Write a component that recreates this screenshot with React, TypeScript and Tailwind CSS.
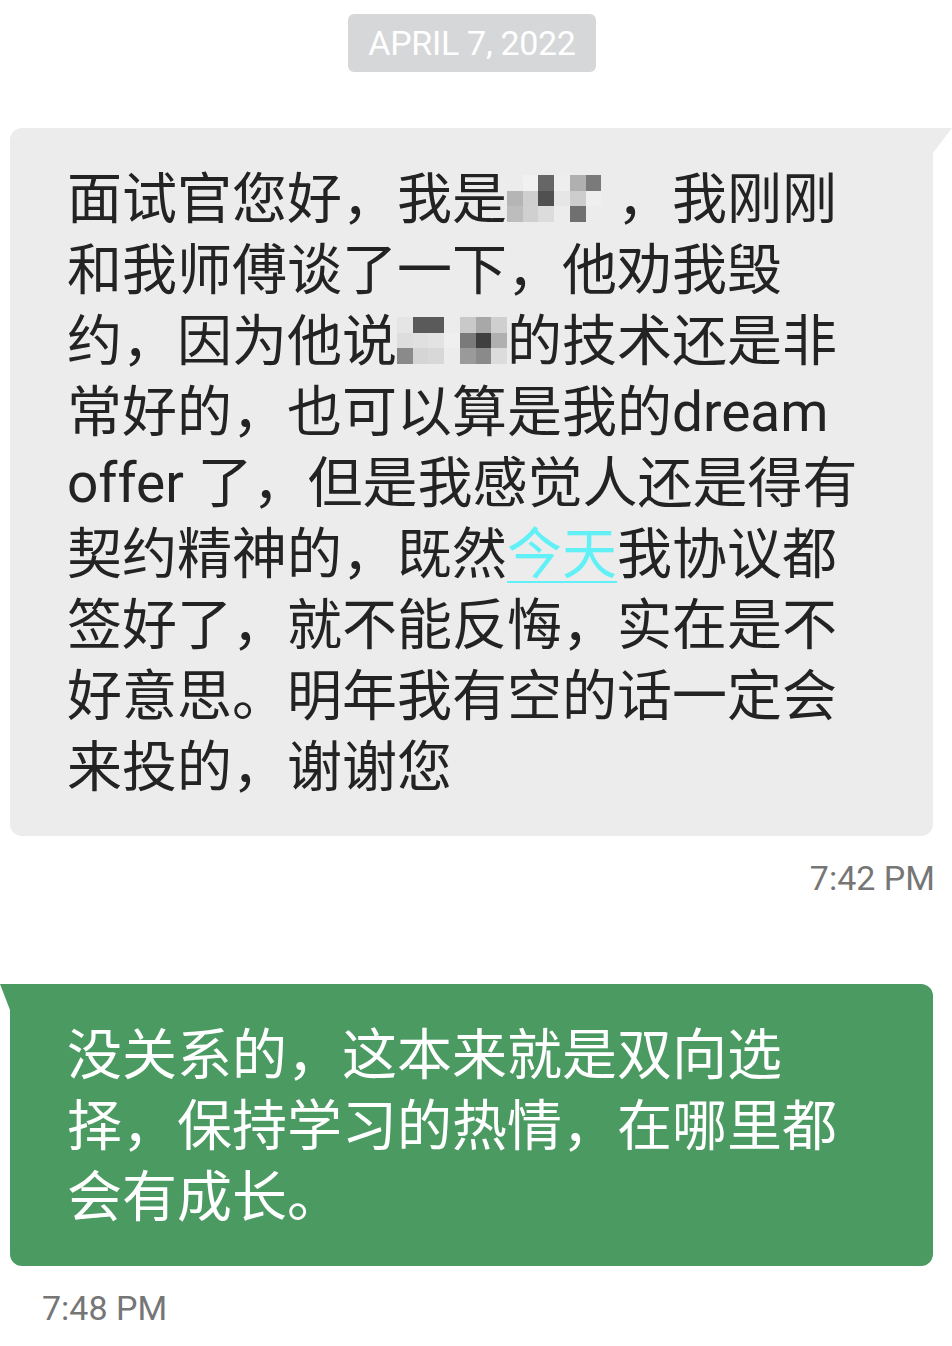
const FONT = "font-['Roboto','Noto_Sans_CJK_SC',sans-serif]";

// pixelated name blur, 7 cols x 3 rows
const BLUR_A = [
  'bg-[#ececec]', 'bg-[#f1f1f1]', 'bg-[#666666]', 'bg-[#eeeeee]', 'bg-[#b0b0b0]', 'bg-[#7a7a7a]', 'bg-[#ececec]',
  'bg-[#b5b5b5]', 'bg-[#cfcfcf]', 'bg-[#505050]', 'bg-[#e6e6e6]', 'bg-[#cdcdcd]', 'bg-[#efefef]', 'bg-[#ececec]',
  'bg-[#bdbdbd]', 'bg-[#d0d0d0]', 'bg-[#dcdcdc]', 'bg-[#ececec]', 'bg-[#707070]', 'bg-[#ececec]', 'bg-[#ececec]',
];

const BLUR_B = [
  'bg-[#e5e5e5]', 'bg-[#5a5a5a]', 'bg-[#5a5a5a]', 'bg-[#ececec]', 'bg-[#c9c9c9]', 'bg-[#a8a8a8]', 'bg-[#cfcfcf]',
  'bg-[#dddddd]', 'bg-[#e0e0e0]', 'bg-[#e3e3e3]', 'bg-[#efefef]', 'bg-[#7a7a7a]', 'bg-[#3f3f3f]', 'bg-[#b0b0b0]',
  'bg-[#8a8a8a]', 'bg-[#d5d5d5]', 'bg-[#d8d8d8]', 'bg-[#ececec]', 'bg-[#9a9a9a]', 'bg-[#8a8a8a]', 'bg-[#dcdcdc]',
];

function Blur({ cells }: { cells: string[] }) {
  return (
    <span className="inline-block overflow-hidden w-[110px] h-[47px] align-[-4px]">
      <span className="grid grid-cols-7 grid-rows-3 w-full h-full">
        {cells.map((c, i) => (
          <span key={i} className={c} />
        ))}
      </span>
    </span>
  );
}

export default function App() {
  return (
    <div className={`w-[952px] min-h-[1346px] bg-white flex flex-col ${FONT}`}>
      {/* date chip */}
      <div className="shrink-0 self-start ml-[348px] mt-[14px] h-[58px] w-[248px] rounded-[6px] bg-[#d6d7d9] flex items-center justify-center text-white text-[34px] tracking-[-0.3px]">
        APRIL 7, 2022
      </div>

      {/* incoming message */}
      <div className="shrink-0 relative mt-[56px] ml-[10px] w-[923px] bg-[#ececec] rounded-[12px] rounded-tr-none pl-[57px] pr-[66px] pt-[36px] pb-[33px]">
        <svg className="absolute top-0 right-[-19px]" width="19" height="25" viewBox="0 0 19 25">
          <polygon points="0,0 19,0 0,25" fill="#ececec" />
        </svg>
        <p className="text-[55px] leading-[71px] text-[#232323] break-all">
          面试官您好，我是<Blur cells={BLUR_A} />，我刚刚和我师傅谈了一下，他劝我毁约，因为他说<Blur cells={BLUR_B} />的技术还是非常好的，也可以算是我的dream offer 了，但是我感觉人还是得有契约精神的，既然
          <span className="text-[#62f0f7] underline decoration-[#62f0f7] decoration-[2px] underline-offset-[8px]">今天</span>
          我协议都签好了，就不能反悔，实在是不好意思。明年我有空的话一定会来投的，谢谢您
        </p>
      </div>
      <div className="shrink-0 self-end mr-[17px] mt-[22px] text-[34px] leading-[40px] text-[#767676]">7:42 PM</div>

      {/* outgoing message */}
      <div className="shrink-0 relative mt-[86px] ml-[10px] w-[923px] bg-[#4a9a62] rounded-[12px] rounded-tl-none pl-[57px] pr-[66px] pt-[36px] pb-[33px]">
        <svg className="absolute top-0 left-[-10px]" width="10" height="26" viewBox="0 0 10 26">
          <polygon points="0,0 10,0 10,26" fill="#4a9a62" />
        </svg>
        <p className="text-[55px] leading-[71px] text-white break-all">
          没关系的，这本来就是双向选择，保持学习的热情，在哪里都会有成长。
        </p>
      </div>
      <div className="shrink-0 self-start ml-[42px] mt-[22px] text-[34px] leading-[40px] text-[#767676]">7:48 PM</div>
    </div>
  );
}
